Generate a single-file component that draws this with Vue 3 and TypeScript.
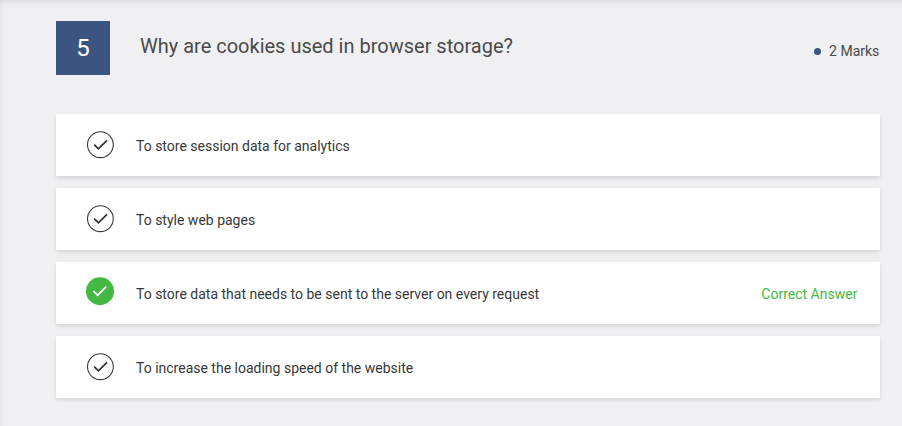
<script setup lang="ts">
interface Option {
  text: string
  correct: boolean
}

const questionNumber = 5
const question = 'Why are cookies used in browser storage?'
const marks = 2
const options: Option[] = [
  { text: 'To store session data for analytics', correct: false },
  { text: 'To style web pages', correct: false },
  { text: 'To store data that needs to be sent to the server on every request', correct: true },
  { text: 'To increase the loading speed of the website', correct: false },
]
</script>

<template>
  <main class="quiz">
    <header class="question">
      <div class="number">{{ questionNumber }}</div>
      <h1 class="title">{{ question }}</h1>
      <div class="marks"><span class="dot"></span>{{ marks }} Marks</div>
    </header>
    <ul class="options">
      <li v-for="option in options" :key="option.text" class="option">
        <svg v-if="option.correct" class="icon" viewBox="0 0 30 30">
          <circle cx="15" cy="14.2" r="14" fill="#43b944" />
          <path d="M8.4 14L12.6 18.2L21.3 9.6" fill="none" stroke="#fff" stroke-width="1.7" />
        </svg>
        <svg v-else class="icon" viewBox="0 0 30 30">
          <circle cx="15.4" cy="15.7" r="12.9" fill="none" stroke="#3c3c3c" stroke-width="1.1" />
          <path d="M9.2 15.6L13.4 19.8L22 11.3" fill="none" stroke="#333" stroke-width="1.8" />
        </svg>
        <span class="text">{{ option.text }}</span>
        <span v-if="option.correct" class="verdict">Correct Answer</span>
      </li>
    </ul>
  </main>
</template>

<style>
body {
  background: #f0f0f3;
}
</style>

<style scoped>
.quiz {
  box-sizing: border-box;
  height: 426px;
  padding: 21px 22px 0 56px;
  background: #f0f0f3;
  box-shadow:
    inset 0 8px 8px -8px rgba(0, 0, 0, 0.13),
    inset 7px 0 7px -7px rgba(0, 0, 0, 0.07);
  font-family: Roboto, sans-serif;
  overflow: hidden;
}

.question {
  display: flex;
  height: 54px;
}

.number {
  width: 54px;
  background: #3b5580;
  color: #fff;
  font-size: 24px;
  line-height: 54px;
  text-align: center;
}

.title {
  flex: 1;
  margin: 0 0 0 30px;
  color: #4a4a4a;
  font-size: 20px;
  font-weight: 400;
  line-height: 50px;
}

.marks {
  display: flex;
  align-items: center;
  padding: 6px 0.7px 0 0;
  color: #4a4a4a;
  font-size: 14px;
}

.dot {
  width: 7px;
  height: 7px;
  margin-right: 8px;
  border-radius: 50%;
  background: #3b5580;
}

.options {
  display: flex;
  flex-direction: column;
  gap: 12px;
  margin: 39px 0 0;
  padding: 0;
  list-style: none;
}

.option {
  display: flex;
  align-items: center;
  box-sizing: border-box;
  height: 62px;
  padding: 0 22.6px 0 29px;
  background: #fff;
  box-shadow: 0 2px 4px rgba(0, 0, 0, 0.12);
  font-size: 14px;
}

.icon {
  width: 30px;
  height: 30px;
  margin-right: 21px;
  flex: none;
  margin-bottom: 2px;
}

.text {
  flex: 1;
  padding-top: 2px;
  color: #383838;
}

.verdict {
  padding-top: 2px;
  color: #43b944;
}
</style>
